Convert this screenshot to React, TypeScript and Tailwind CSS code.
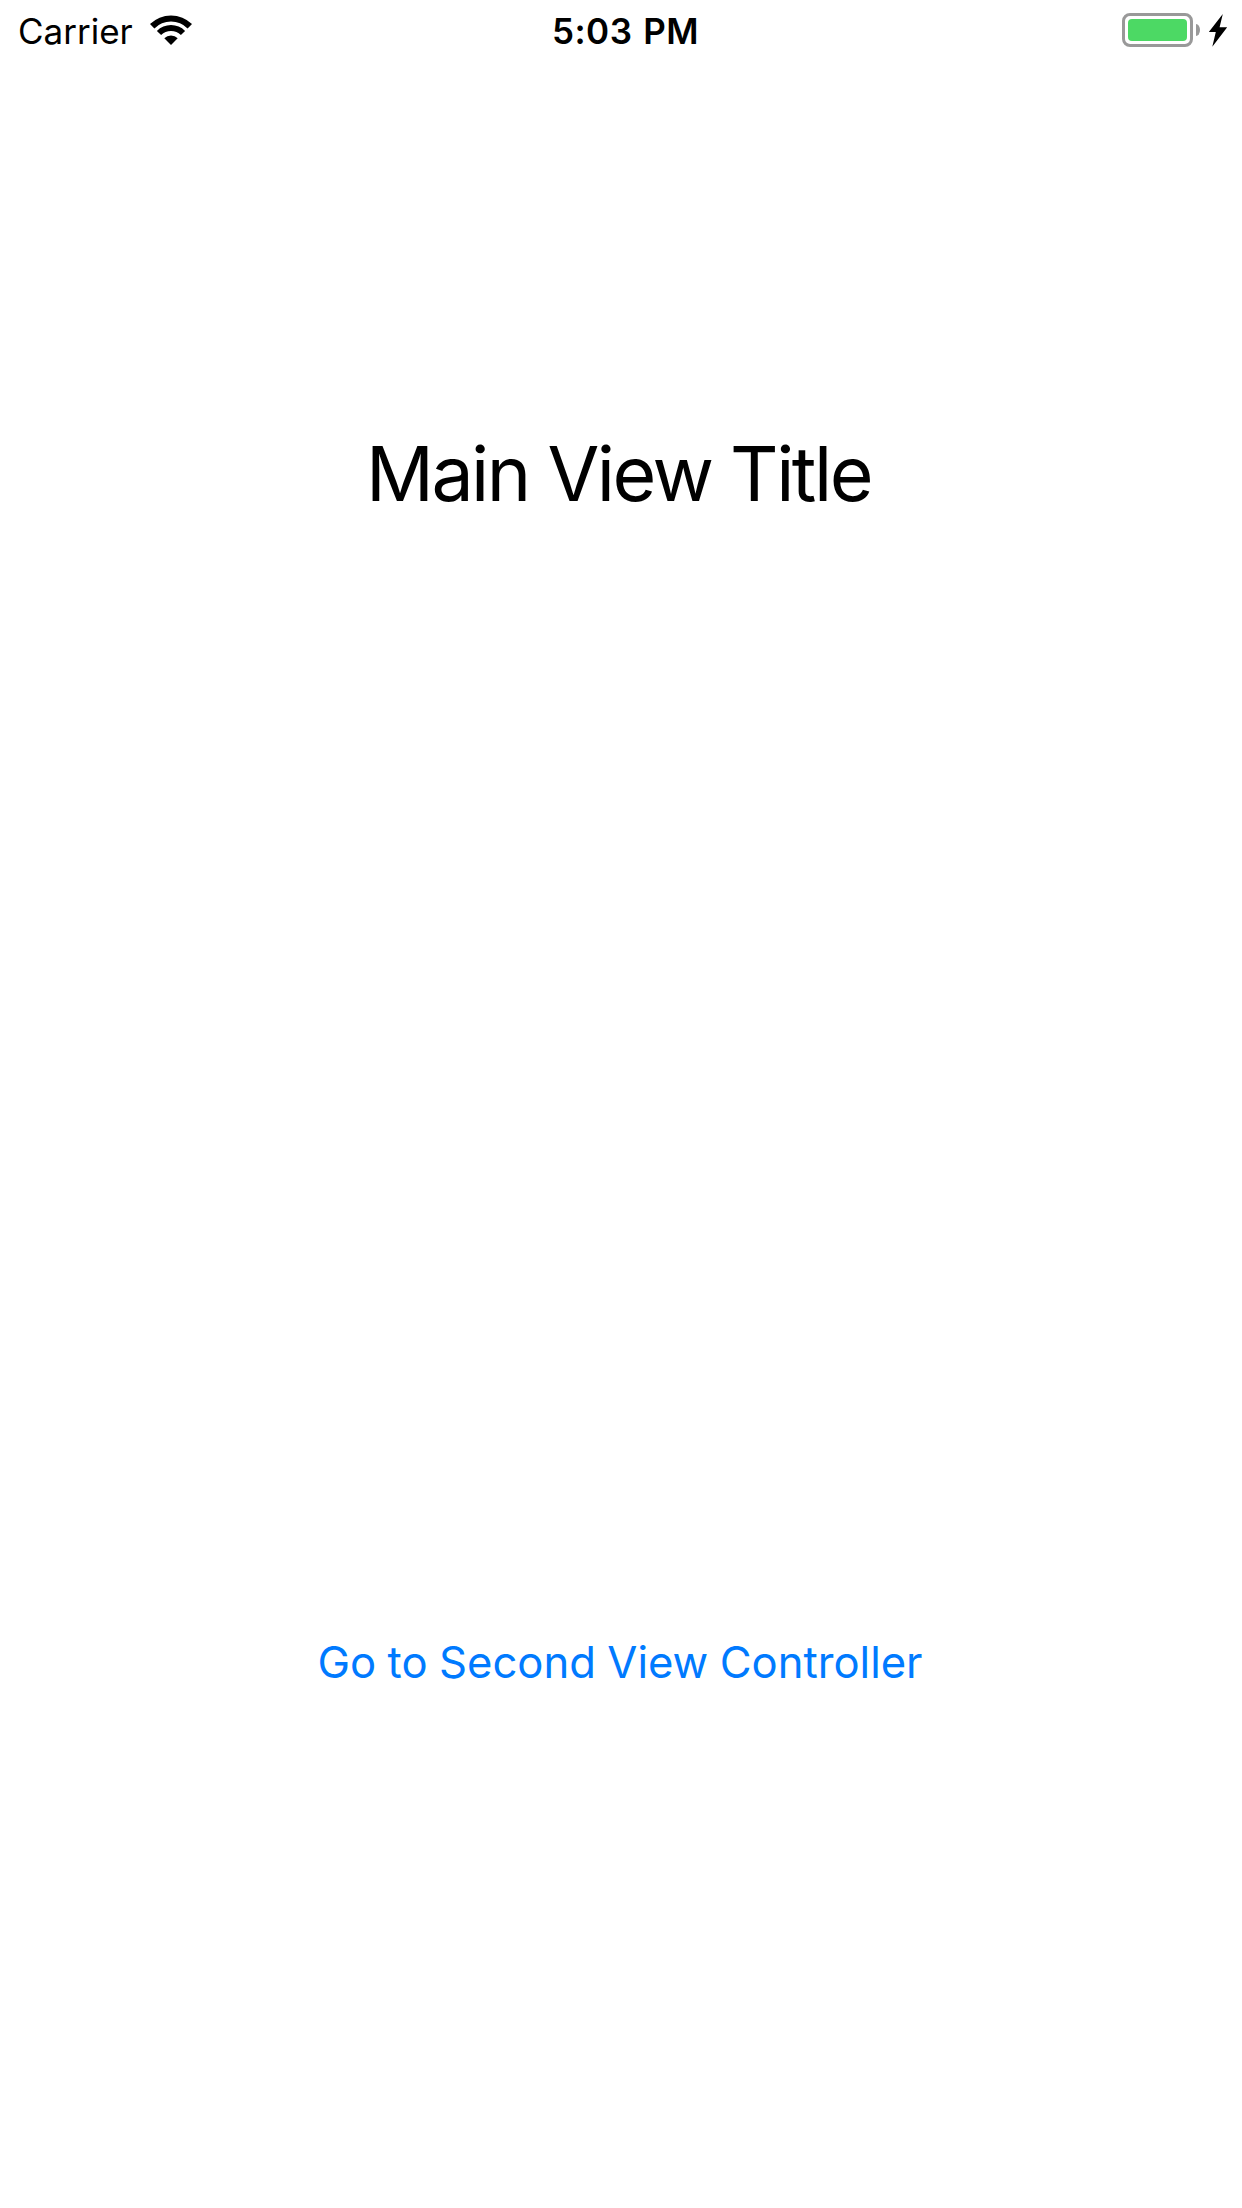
import React from 'react';

function WifiIcon() {
  return (
    <svg className="mb-[3px] ml-[17px] h-[31px] w-[42px]" viewBox="150 14 42 31" fill="black">
      <path d="M150 24A30 30 0 0 1 192 24L187.6 28.4A23.3 23.3 0 0 0 154.4 28.4Z" />
      <path d="M156.9 30.9A20 20 0 0 1 185.1 30.9L180.9 35.1A14 14 0 0 0 161.1 35.1Z" />
      <path d="M164.3 38.3A9.4 9.4 0 0 1 177.7 38.3L171 45Z" />
    </svg>
  );
}

function BatteryIcon() {
  return (
    <div className="mb-[2px] flex items-center">
      <div className="h-[34px] w-[71px] rounded-[8px] border-3 border-[#999999] p-[3px]">
        <div className="h-full w-full rounded-[4px] bg-[#4cd964]" />
      </div>
      <div className="ml-[3px] h-[12px] w-[4px] rounded-[0_100%_100%_0/0_50%_50%_0] bg-[#999999]" />
      <svg className="ml-[9px] h-[34px] w-[18px]" viewBox="1209 13 18 34" fill="black">
        <path d="M1222.8 14L1208.8 32H1215.8L1212.3 46.8L1227.2 27.2H1219.6Z" />
      </svg>
    </div>
  );
}

export default function App() {
  return (
    <main className="flex h-[2208px] w-[1242px] flex-col bg-white font-['Inter',sans-serif] text-black">
      <header className="grid h-[62px] grid-cols-3 items-center pr-[15px] pl-[18px]">
        <div className="flex items-center">
          <span className="text-[35px] leading-[62px]">Carrier</span>
          <WifiIcon />
        </div>
        <span className="pl-[6px] text-center text-[35px] leading-[62px] font-semibold tracking-[0.5px] [word-spacing:1.4px]">
          5:03 PM
        </span>
        <div className="flex justify-end">
          <BatteryIcon />
        </div>
      </header>
      <h1 className="mt-[364px] pr-[5px] text-center text-[75.2px] leading-[96px] tracking-[-2.5px]">
        Main View Title
      </h1>
      <button className="mt-[1111px] self-center pr-[2px] text-[43.6px] leading-[60px] text-[#007aff] [word-spacing:-0.8px]">
        Go to Second View Controller
      </button>
    </main>
  );
}
